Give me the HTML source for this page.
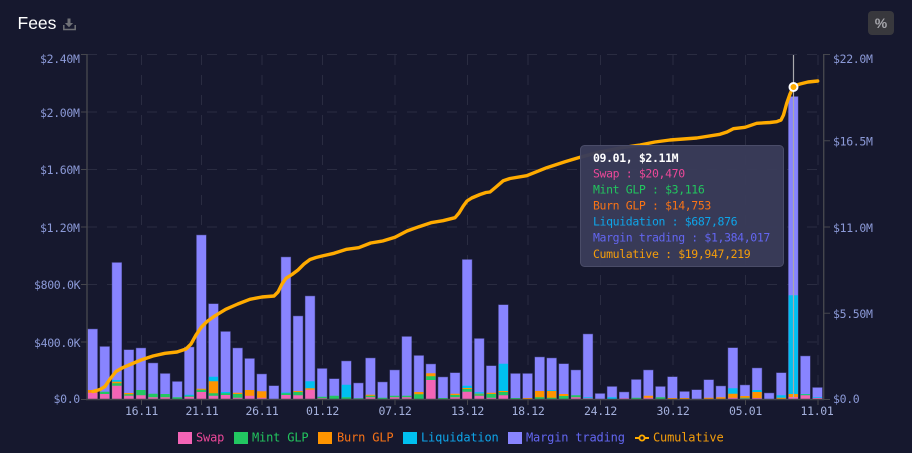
<!DOCTYPE html>
<html lang="en">
<head>
<meta charset="utf-8">
<title>Fees</title>
<style>
html,body{margin:0;padding:0;background:#16182e;width:912px;height:453px;overflow:hidden}
svg{display:block}
text{font-family:"DejaVu Sans Mono","Liberation Mono",monospace}
.ly text{font-size:11.5px;fill:#8c9ad8;letter-spacing:-.32px}
.lx text{font-size:11.5px;fill:#a4b0dc;letter-spacing:-.32px;text-anchor:middle}
.tt text{font-size:11.5px;letter-spacing:-.37px}
.lg text{font-size:12px;letter-spacing:-.17px}
</style>
</head>
<body>
<svg width="912" height="453" viewBox="0 0 912 453" xmlns="http://www.w3.org/2000/svg">
<rect width="912" height="453" fill="#16182e"/>
<text x="17.5" y="29" style="font-family:'Liberation Sans',sans-serif;font-size:17.5px" fill="#fff">Fees</text>
<path d="M67.5 18.5h3v4.5h2.6l-4.1 4.2-4.1-4.2h2.6z" fill="#6f7076"/>
<path d="M63.8 25v4.5h11.4V25" fill="none" stroke="#6f7076" stroke-width="1.5"/>
<rect x="868" y="11" width="26" height="24" rx="4" fill="#38383d"/>
<text x="881" y="28" text-anchor="middle" style="font-family:'Liberation Sans',sans-serif;font-size:14px;font-weight:bold" fill="#a5a5ab">%</text>

<g fill="none" stroke="#2a2c41" stroke-width="1" stroke-dasharray="10 10">
<path d="M87 54.5H823M87 112H823M87 169.5H823M87 227H823M87 284.5H823M87 342H823"/>
<path d="M141.5 55V399M201.5 55V399M262 55V399M322.5 55V399M395 55V399M467.5 55V399M528 55V399M600.5 55V399M673 55V399M745.5 55V399M818 55V399"/>
</g>

<path fill="#8884ff" stroke="#8884ff" stroke-opacity=".45" stroke-width="1" d="M88 329.3h9.3V399h-9.3zM100.1 346.7h9.3V399h-9.3zM112.2 262.7h9.3V399h-9.3zM124.2 350h9.3V399h-9.3zM136.3 348.3h9.3V399h-9.3zM148.4 363.3h9.3V399h-9.3zM160.5 373.7h9.3V399h-9.3zM172.6 381.7h9.3V399h-9.3zM184.6 347.3h9.3V399h-9.3zM196.7 235.3h9.3V399h-9.3zM208.8 304h9.3V399h-9.3zM220.9 331.7h9.3V399h-9.3zM233 348.3h9.3V399h-9.3zM245 358.7h9.3V399h-9.3zM257.1 374.3h9.3V399h-9.3zM269.2 386h9.3V399h-9.3zM281.3 257.3h9.3V399h-9.3zM293.4 316.3h9.3V399h-9.3zM305.4 296.3h9.3V399h-9.3zM317.5 368.7h9.3V399h-9.3zM329.6 379h9.3V399h-9.3zM341.7 361.3h9.3V399h-9.3zM353.8 383.3h9.3V399h-9.3zM365.8 358.3h9.3V399h-9.3zM377.9 382.3h9.3V399h-9.3zM390 370.3h9.3V399h-9.3zM402.1 336.7h9.3V399h-9.3zM414.2 355.7h9.3V399h-9.3zM426.2 364.3h9.3V399h-9.3zM438.3 377.3h9.3V399h-9.3zM450.4 373h9.3V399h-9.3zM462.5 259.7h9.3V399h-9.3zM474.6 338.7h9.3V399h-9.3zM486.6 366h9.3V399h-9.3zM498.7 305h9.3V399h-9.3zM510.8 373.7h9.3V399h-9.3zM522.9 373.7h9.3V399h-9.3zM535 357.3h9.3V399h-9.3zM547 358.3h9.3V399h-9.3zM559.1 364h9.3V399h-9.3zM571.2 370.3h9.3V399h-9.3zM583.3 334.3h9.3V399h-9.3zM595.4 393.7h9.3V399h-9.3zM607.4 386.7h9.3V399h-9.3zM619.5 392.3h9.3V399h-9.3zM631.6 379.7h9.3V399h-9.3zM643.7 370.3h9.3V399h-9.3zM655.8 386.7h9.3V399h-9.3zM667.8 377h9.3V399h-9.3zM679.9 391.7h9.3V399h-9.3zM692 390h9.3V399h-9.3zM704.1 380h9.3V399h-9.3zM716.2 386.3h9.3V399h-9.3zM728.2 348h9.3V399h-9.3zM740.3 385.3h9.3V399h-9.3zM752.4 368.3h9.3V399h-9.3zM764.5 393.3h9.3V399h-9.3zM776.6 373h9.3V399h-9.3zM788.6 96.7h9.3V399h-9.3zM800.7 356.3h9.3V399h-9.3zM812.8 387.7h9.3V399h-9.3z"/>

<path fill="#00c0f0" d="M112.2 380h9.3V399h-9.3zM184.6 394.7h9.3V399h-9.3zM208.8 376.7h9.3V399h-9.3zM220.9 392h9.3V399h-9.3zM281.3 392.5h9.3V399h-9.3zM305.4 381.3h9.3V399h-9.3zM341.7 384.7h9.3V399h-9.3zM462.5 385.7h9.3V399h-9.3zM474.6 392.3h9.3V399h-9.3zM498.7 363.7h9.3V399h-9.3zM547 390.3h9.3V399h-9.3zM583.3 397.3h9.3V399h-9.3zM607.4 397.3h9.3V399h-9.3zM728.2 388.3h9.3V399h-9.3zM752.4 390h9.3V399h-9.3zM776.6 395.3h9.3V399h-9.3zM788.6 295.3h9.3V399h-9.3zM800.7 394h9.3V399h-9.3zM812.8 397.3h9.3V399h-9.3z"/>

<path fill="#ff9400" d="M88 390h9.3V399h-9.3zM112.2 381.7h9.3V399h-9.3zM124.2 393h9.3V399h-9.3zM196.7 388.7h9.3V399h-9.3zM208.8 381.3h9.3V399h-9.3zM233 392.7h9.3V399h-9.3zM245 390h9.3V399h-9.3zM257.1 391.3h9.3V399h-9.3zM293.4 391h9.3V399h-9.3zM305.4 388.3h9.3V399h-9.3zM365.8 394.7h9.3V399h-9.3zM414.2 392h9.3V399h-9.3zM426.2 373.3h9.3V399h-9.3zM450.4 393.7h9.3V399h-9.3zM462.5 388h9.3V399h-9.3zM474.6 393.7h9.3V399h-9.3zM486.6 392.7h9.3V399h-9.3zM498.7 391h9.3V399h-9.3zM522.9 398h9.3V399h-9.3zM535 391h9.3V399h-9.3zM547 391h9.3V399h-9.3zM559.1 394h9.3V399h-9.3zM643.7 395.7h9.3V399h-9.3zM667.8 398h9.3V399h-9.3zM679.9 398h9.3V399h-9.3zM704.1 397.7h9.3V399h-9.3zM716.2 397.3h9.3V399h-9.3zM728.2 393.7h9.3V399h-9.3zM740.3 396h9.3V399h-9.3zM752.4 392h9.3V399h-9.3zM776.6 397.7h9.3V399h-9.3zM788.6 394h9.3V399h-9.3z"/>

<path fill="#22c761" d="M100.1 391.7h9.3V399h-9.3zM112.2 383.3h9.3V399h-9.3zM124.2 394.3h9.3V399h-9.3zM136.3 390h9.3V399h-9.3zM148.4 393.7h9.3V399h-9.3zM160.5 394h9.3V399h-9.3zM172.6 397.3h9.3V399h-9.3zM184.6 395.7h9.3V399h-9.3zM196.7 389.7h9.3V399h-9.3zM208.8 393.3h9.3V399h-9.3zM220.9 393.3h9.3V399h-9.3zM233 394h9.3V399h-9.3zM281.3 393.3h9.3V399h-9.3zM293.4 392h9.3V399h-9.3zM317.5 396.7h9.3V399h-9.3zM329.6 395.7h9.3V399h-9.3zM341.7 397.3h9.3V399h-9.3zM353.8 398.3h9.3V399h-9.3zM365.8 395.7h9.3V399h-9.3zM377.9 397.7h9.3V399h-9.3zM390 395.7h9.3V399h-9.3zM402.1 395.7h9.3V399h-9.3zM414.2 394.3h9.3V399h-9.3zM426.2 376.3h9.3V399h-9.3zM438.3 398h9.3V399h-9.3zM450.4 395h9.3V399h-9.3zM462.5 389h9.3V399h-9.3zM474.6 394.3h9.3V399h-9.3zM486.6 394h9.3V399h-9.3zM498.7 392h9.3V399h-9.3zM510.8 398h9.3V399h-9.3zM535 397.3h9.3V399h-9.3zM547 397.7h9.3V399h-9.3zM559.1 396h9.3V399h-9.3zM571.2 395.3h9.3V399h-9.3zM631.6 397.7h9.3V399h-9.3zM655.8 397.3h9.3V399h-9.3zM740.3 397.7h9.3V399h-9.3zM800.7 394.3h9.3V399h-9.3z"/>

<path fill="#f364b6" d="M88 392.7h9.3V399h-9.3zM100.1 394h9.3V399h-9.3zM112.2 385.7h9.3V399h-9.3zM124.2 395.7h9.3V399h-9.3zM136.3 395.3h9.3V399h-9.3zM148.4 397.3h9.3V399h-9.3zM160.5 397.3h9.3V399h-9.3zM184.6 396.7h9.3V399h-9.3zM196.7 392h9.3V399h-9.3zM208.8 395.7h9.3V399h-9.3zM220.9 395h9.3V399h-9.3zM233 397.7h9.3V399h-9.3zM245 395.7h9.3V399h-9.3zM257.1 397.7h9.3V399h-9.3zM281.3 395h9.3V399h-9.3zM293.4 395.3h9.3V399h-9.3zM305.4 389.7h9.3V399h-9.3zM317.5 398.3h9.3V399h-9.3zM365.8 397.3h9.3V399h-9.3zM390 397.3h9.3V399h-9.3zM402.1 397.3h9.3V399h-9.3zM426.2 380h9.3V399h-9.3zM450.4 397.3h9.3V399h-9.3zM462.5 391.7h9.3V399h-9.3zM474.6 395.7h9.3V399h-9.3zM486.6 397.7h9.3V399h-9.3zM498.7 395.3h9.3V399h-9.3zM571.2 397.3h9.3V399h-9.3zM583.3 398.3h9.3V399h-9.3zM619.5 398.3h9.3V399h-9.3zM643.7 397.7h9.3V399h-9.3zM728.2 397.7h9.3V399h-9.3zM740.3 398.5h9.3V399h-9.3zM752.4 398h9.3V399h-9.3zM788.6 397h9.3V399h-9.3zM800.7 395.3h9.3V399h-9.3zM812.8 398h9.3V399h-9.3z"/>

<path d="M793.5 55V399" stroke="#a9a9ad" stroke-width="1.2" fill="none"/>

<polyline fill="none" stroke="#ffab00" stroke-width="3.4" stroke-linejoin="round" stroke-linecap="round" points="93,391.5 100,389.5 105,386.5 110,379 116,371.5 122,368 129,365 141,360 153,356 165,353.3 177,352 186,349 191,344 196,335 201.5,327 207,321.5 213.6,316.7 225.7,309.3 237.8,304 249.9,299.3 262,297 274,296 278,292 282,284 286,278.3 292,274.5 298,270 304,264 310,259.5 316,257.5 322,256 334,253.3 346.7,249.3 358.7,247.7 370.7,243 382.7,241 395,237.3 407,231 419,226.7 431,222.7 443,220.7 455,217.7 459,213 463.3,206 467,201 471.7,198 480,194.5 486,192.5 490,192 496,187 503.3,180.7 510,178.5 526.7,175.7 546.7,167.7 565,161.7 580,157.3 600,152 620,148 640,145 655,142 670,140 696.7,138 720,134.3 727,132 733.3,128.7 745,127.3 756.7,123.3 770,122.5 776.7,121.7 781,120 783.5,115 786.7,103.3 790,94 793.3,86.7 797,85 800,84 808,82 817.7,81"/>

<circle cx="793.5" cy="87" r="4" fill="#ffab00" stroke="#fff" stroke-width="2"/>

<g fill="none" stroke="#45464d" stroke-width="1.4">
<path d="M87 54V399.5M823.7 54V399.5M86 399.5H824"/>
<path stroke-width="1" d="M81 54.5H87M81 112H87M81 169.5H87M81 227H87M81 284.5H87M81 342H87M81 399.5H87M824 54.5H830M824 140.75H830M824 227H830M824 313.25H830M824 399.5H830M141.5 400V405M201.5 400V405M262 400V405M322.5 400V405M395 400V405M467.5 400V405M528 400V405M600.5 400V405M673 400V405M745.5 400V405M818 400V405"/>
</g>

<g class="ly">
<text x="40" y="63">$2.40M</text>
<text x="40" y="117">$2.00M</text>
<text x="40" y="174">$1.60M</text>
<text x="40" y="232">$1.20M</text>
<text x="34" y="289">$800.0K</text>
<text x="34" y="347">$400.0K</text>
<text x="53.5" y="403">$0.0</text>
<text x="833" y="63">$22.0M</text>
<text x="833" y="145.5">$16.5M</text>
<text x="833" y="232">$11.0M</text>
<text x="833" y="318">$5.50M</text>
<text x="833" y="403">$0.0</text>
</g>
<g class="lx">
<text x="141.5" y="415">16.11</text>
<text x="202" y="415">21.11</text>
<text x="262" y="415">26.11</text>
<text x="322.5" y="415">01.12</text>
<text x="395" y="415">07.12</text>
<text x="467.5" y="415">13.12</text>
<text x="528" y="415">18.12</text>
<text x="600.5" y="415">24.12</text>
<text x="673" y="415">30.12</text>
<text x="745.5" y="415">05.01</text>
<text x="817" y="415">11.01</text>
</g>

<rect x="580.5" y="145.5" width="203" height="121" rx="4" fill="#3a3c59" fill-opacity=".97" stroke="#4a4c68"/>
<g class="tt">
<text x="593" y="162" fill="#fff" font-weight="bold">09.01, $2.11M</text>
<text x="593" y="177.5" fill="#ec4899">Swap : $20,470</text>
<text x="593" y="193.5" fill="#22c55e">Mint GLP : $3,116</text>
<text x="593" y="209.5" fill="#f97316">Burn GLP : $14,753</text>
<text x="593" y="225.5" fill="#0ea5e9">Liquidation : $687,876</text>
<text x="593" y="241.5" fill="#6366f1">Margin trading : $1,384,017</text>
<text x="593" y="258" fill="#f59e0b">Cumulative : $19,947,219</text>
</g>

<g class="lg">
<rect x="178" y="432" width="14" height="12" fill="#f364b6"/>
<text x="196" y="441.5" fill="#ec4899">Swap</text>
<rect x="234" y="432" width="14" height="12" fill="#22c761"/>
<text x="252" y="441.5" fill="#22c55e">Mint GLP</text>
<rect x="318" y="432" width="14" height="12" fill="#ff9400"/>
<text x="337" y="441.5" fill="#f97316">Burn GLP</text>
<rect x="403" y="432" width="14" height="12" fill="#00c0f0"/>
<text x="421" y="441.5" fill="#0ea5e9">Liquidation</text>
<rect x="508" y="432" width="14" height="12" fill="#8884ff"/>
<text x="526" y="441.5" fill="#6366f1">Margin trading</text>
<path d="M635 438H649" stroke="#ffab00" stroke-width="2"/>
<circle cx="642" cy="438" r="2.6" fill="#16182e" stroke="#ffab00" stroke-width="1.8"/>
<text x="653" y="441.5" fill="#f59e0b">Cumulative</text>
</g>
</svg>
</body>
</html>
